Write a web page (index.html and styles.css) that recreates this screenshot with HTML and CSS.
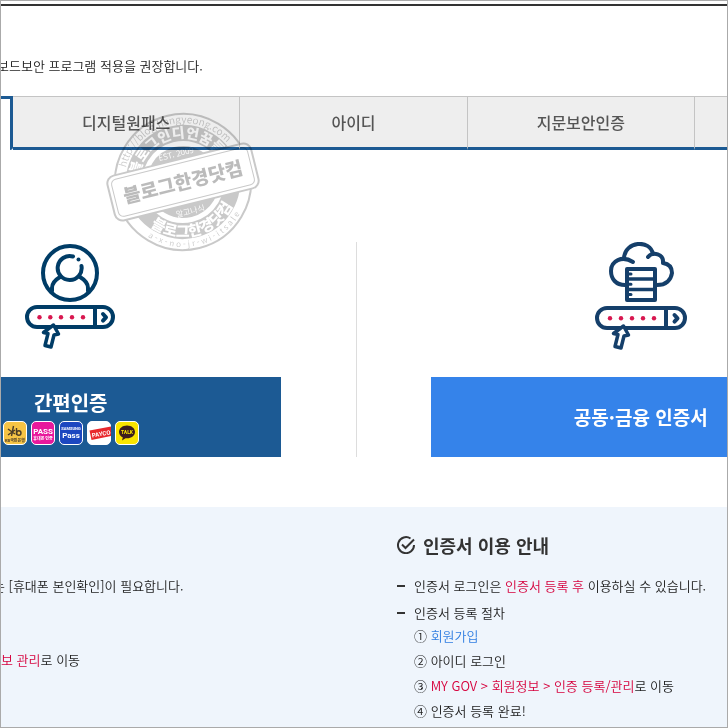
FILE: index.html
```html
<!DOCTYPE html>
<html lang="ko">
<head>
    <meta charset="UTF-8">
    <meta name="viewport" content="width=device-width, initial-scale=1.0">
    <title>로그인</title>
    <link rel="stylesheet" href="styles.css">
</head>
<body>
    <div class="page">
        <p class="notice">보드보안 프로그램 적용을 권장합니다.</p>

        <nav class="tabs">
            <a href="#" class="tab active" aria-label="인증서"></a>
            <a href="#" class="tab">디지털원패스</a>
            <a href="#" class="tab">아이디</a>
            <a href="#" class="tab">지문보안인증</a>
            <a href="#" class="tab" aria-label="더보기"></a>
        </nav>

        <main class="choices">
            <section class="choice choice-left">
                <svg class="choice-icon" viewBox="21 242 100 110" fill="none" stroke="#003c66" stroke-width="4" stroke-linecap="round" stroke-linejoin="round">
                    <circle cx="70" cy="273" r="27"/>
                    <path d="M73 256.500A12 12 0 1 0 81.500 266"/>
                    <path d="M52 291v-3c0-4 3-8 8-11M80 277c5 3 8 7 8 11v3"/>
                    <circle cx="78.500" cy="259.500" r="2" fill="#003c66" stroke="none"/>
                    <rect x="27" y="307" width="86" height="20" rx="10"/>
                    <path d="M95 307v20"/>
                    <path d="M103 314l3 3.300-3 3.300" stroke-width="4"/>
                    <g fill="#d8174f" stroke="none">
                        <circle cx="39.500" cy="317.300" r="2.200"/>
                        <circle cx="50.300" cy="317.300" r="2.200"/>
                        <circle cx="61" cy="317.300" r="2.200"/>
                        <circle cx="72" cy="317.300" r="2.200"/>
                        <circle cx="83" cy="317.300" r="2.200"/>
                    </g>
                    <path d="M53.500 325L43.500 332.500L48 333.500L45 345.500L51 347L54 335L58.500 334Z" fill="#fff" stroke-width="3.500"/>
                </svg>
                <button type="button" class="choice-button simple">
                    <span>간편인증</span>
                    <span class="apps">
                        <svg viewBox="0 0 24 24" class="app">
                            <rect x=".5" y=".5" width="23" height="23" rx="4.500" fill="#f6c445" stroke="#fff"/>
                            <path d="M5 8l7 5M10.500 5l-2 10M5 14l7-5M13.500 7v7" stroke="#4a3c28" stroke-width="1.400" fill="none"/>
                            <circle cx="15.800" cy="12" r="2.200" stroke="#4a3c28" stroke-width="1.400" fill="none"/>
                            <text x="12" y="21" font-size="4" fill="#4a3c28">KB국민은행</text>
                        </svg>
                        <svg viewBox="0 0 24 24" class="app">
                            <rect x=".5" y=".5" width="23" height="23" rx="4.500" fill="#e8189c" stroke="#fff"/>
                            <text x="12" y="13" font-size="8" fill="#fff">PASS</text>
                            <text x="12" y="19" font-size="4" fill="#fff">휴대폰 인증</text>
                        </svg>
                        <svg viewBox="0 0 24 24" class="app">
                            <rect x=".5" y=".5" width="23" height="23" rx="4.500" fill="#1c47c0" stroke="#fff"/>
                            <text x="12" y="9" font-size="4" fill="#fff">SAMSUNG</text>
                            <text x="12" y="17" font-size="8" fill="#fff">Pass</text>
                        </svg>
                        <svg viewBox="0 0 24 24" class="app">
                            <rect x=".5" y=".5" width="23" height="23" rx="4.500" fill="#fff" stroke="#fff"/>
                            <path d="M2.500 9.500L24 5.500V15L4.500 19Z" fill="#e8282d"/>
                            <text x="14" y="15" font-size="6" fill="#fff" transform="rotate(-10 14 12)">PAYCO</text>
                        </svg>
                        <svg viewBox="0 0 24 24" class="app">
                            <rect x=".5" y=".5" width="23" height="23" rx="4.500" fill="#f8e400" stroke="#fff"/>
                            <path d="M12 4.500c-4.600 0-8 2.900-8 6.500 0 2.400 1.500 4.400 3.800 5.500l-.8 3 3.500-2.300c5.300.6 9.500-2.200 9.500-6.200 0-3.600-3.400-6.500-8-6.500z" fill="#3b1e1e"/>
                            <text x="12" y="13" font-size="5" fill="#f8e400">TALK</text>
                        </svg>
                    </span>
                </button>
            </section>

            <section class="choice choice-right">
                <svg class="choice-icon" viewBox="591 242 100 110" fill="none" stroke="#153f6a" stroke-width="4" stroke-linecap="round" stroke-linejoin="round">
                    <path d="M625 285C616 285 611 279 611 271C611 261 622 255 633 262"/>
                    <path d="M624 258C625 241 650 239 653 254"/>
                    <path d="M648 257C653 251 664 254 663 263C670 264 672 268 672 273C671 280 666 285 657 285"/>
                    <rect x="627" y="269" width="28" height="31"/>
                    <path d="M627 279h28M627 289.500h28" stroke-width="3.500"/>
                    <path d="M628 274h3M628 284.300h3M628 294.600h3" stroke-width="3"/>
                    <rect x="597" y="308" width="88" height="20" rx="10"/>
                    <path d="M666 308v20"/>
                    <path d="M674.500 315l3 3.300-3 3.300" stroke-width="4"/>
                    <g fill="#d8174f" stroke="none">
                        <circle cx="610" cy="318.300" r="2.200"/>
                        <circle cx="621" cy="318.300" r="2.200"/>
                        <circle cx="632" cy="318.300" r="2.200"/>
                        <circle cx="643" cy="318.300" r="2.200"/>
                        <circle cx="654" cy="318.300" r="2.200"/>
                    </g>
                    <path d="M623.500 326L613.500 333.500L618 334.500L615 346.500L621 348L624 336L628.500 335Z" fill="#fff" stroke-width="3.500"/>
                </svg>
                <button type="button" class="choice-button joint">공동·금융 인증서</button>
            </section>
        </main>

        <div class="guide">
            <section class="guide-left">
                <ul class="guide-list">
                    <li>는 [휴대폰 본인확인]이 필요합니다.</li>
                </ul>
                <p class="guide-step"><em>보 관리</em>로 이동</p>
            </section>

            <section class="guide-right">
                <h2>
                    <svg class="check" viewBox="0 0 18 18" fill="none" stroke="#333" stroke-width="2">
                        <path d="M13.500 2.500A8 8 0 1 0 17 9"/>
                        <path d="M5 8.500l3.500 3.500L17 3.500"/>
                    </svg>
                    인증서 이용 안내
                </h2>
                <ul class="guide-list dashed">
                    <li>인증서 로그인은 <em>인증서 등록 후</em> 이용하실 수 있습니다.</li>
                    <li>인증서 등록 절차
                        <ol>
                            <li>① <a href="#">회원가입</a></li>
                            <li>② 아이디 로그인</li>
                            <li>③ <em>MY GOV &gt; 회원정보 &gt; 인증 등록/관리</em>로 이동</li>
                            <li>④ 인증서 등록 완료!</li>
                        </ol>
                    </li>
                </ul>
            </section>
        </div>

        <svg class="stamp" viewBox="-80 -80 160 160">
            <defs>
                <path id="outerTop" d="M-59 0A59 59 0 0 1 59 0"/>
                <path id="outerBottom" d="M-65 0A65 65 0 0 0 65 0"/>
                <path id="innerTop" d="M-44 0A44 44 0 0 1 44 0"/>
                <path id="innerBottom" d="M-55 0A55 55 0 0 0 55 0"/>
            </defs>
            <g transform="rotate(-14)" text-anchor="middle">
                <circle r="68" fill="#fff" stroke="#777" stroke-width="2"/>
                <circle r="49" fill="none" stroke="#777" stroke-width="16"/>
                <circle r="37" fill="#777" stroke="#fff" stroke-width="2"/>
                <text font-size="10" fill="#777"><textPath href="#outerTop" startOffset="50%">http://blog.hangyeong.com</textPath></text>
                <text font-size="8" fill="#777"><textPath href="#outerBottom" startOffset="50%">a - x - n o - j r - w i - i t s a l e</textPath></text>
                <text font-size="14" font-weight="900" fill="#fff"><textPath href="#innerTop" startOffset="50%">블로그인디언꿈들</textPath></text>
                <text font-size="15" font-weight="900" fill="#fff"><textPath href="#innerBottom" startOffset="50%">블로그한경닷컴</textPath></text>
                <text y="-26" font-size="8" fill="#fff">EST. 2009</text>
                <text y="33" font-size="8" fill="#fff">알고나식</text>
                <rect x="-74" y="-23" width="148" height="46" rx="8" fill="#fff" stroke="#777" stroke-width="2"/>
                <rect x="-70" y="-19" width="140" height="38" rx="5" fill="#fff" stroke="#777"/>
                <text y="7" font-size="19" font-weight="900" fill="#555">블로그한경닷컴</text>
            </g>
        </svg>
    </div>
</body>
</html>
```

FILE: styles.css
```css
* {
    box-sizing: border-box;
}
body {
    margin: 0;
    font-family: "Noto Sans CJK KR", sans-serif;
    font-size: 13px;
    font-weight: 350;
    color: #222;
}
.page {
    position: relative;
    display: flex;
    flex-direction: column;
    min-height: 100vh;
    border: 1px solid #aaa;
    overflow: hidden;
    background: #fff;
}
.page::before {
    content: "";
    height: 2px;
    margin-top: 3px;
    background: #333;
}
ul, ol, p, h2 {
    margin: 0;
    padding: 0;
    list-style: none;
}
em {
    font-style: normal;
    color: #d6003c;
}
a {
    color: #2f7de1;
    text-decoration: none;
}
.notice {
    margin: 50px 0 20px -4px;
    line-height: 20px;
    white-space: nowrap;
}

/* tabs */
.tabs {
    display: grid;
    grid-template-columns: 12px repeat(3, 1fr) 32px;
    height: 54px;
}
.tab {
    display: flex;
    align-items: center;
    justify-content: center;
    border-top: 1px solid #c4c4c4;
    border-right: 1px solid #c4c4c4;
    border-bottom: 3px solid #1c5a93;
    background: #eee;
    color: #555;
    font-size: 16px;
    font-weight: 500;
}
.tab:last-child {
    border-right: 0;
}
.tab.active {
    border-top: 3px solid #1c5a93;
    border-right: 3px solid #1c5a93;
    border-bottom: 0;
    border-bottom-right-radius: 3px;
    background: #fff;
}

/* login choices */
.choices {
    display: grid;
    grid-template-columns: 49% 51%;
    padding: 92px 0 50px;
}
.choice {
    display: flex;
    flex-direction: column;
}
.choice-left {
    align-items: flex-end;
    padding-right: 75px;
    border-right: 1px solid #ddd;
}
.choice-right {
    align-items: flex-start;
    padding-left: 74px;
}
.choice-icon {
    width: 100px;
    height: 110px;
    margin: 0 160px 25px;
}
.choice-button {
    display: flex;
    flex-direction: column;
    flex-shrink: 0;
    align-items: center;
    justify-content: center;
    gap: 4px;
    width: 420px;
    height: 80px;
    padding: 0;
    border: 0;
    color: #fff;
    font-family: inherit;
    font-size: 20px;
    font-weight: 700;
    line-height: 28px;
    cursor: pointer;
}
.simple {
    background: #1c5a94;
}
.joint {
    background: #3583ea;
    font-size: 19px;
}
.apps {
    display: flex;
    gap: 4px;
}
.app {
    width: 24px;
    height: 24px;
    font-family: Roboto, "Noto Sans CJK KR", sans-serif;
    font-weight: 700;
    text-anchor: middle;
}

/* guide */
.guide {
    display: grid;
    grid-template-columns: 396px 1fr;
    flex: 1;
    padding: 24px 0 0;
    background: #eff5fc;
    white-space: nowrap;
}
.guide-left {
    padding-top: 45px;
}
.guide-left .guide-list {
    margin-left: -8px;
}
.guide-step {
    margin-top: 51px;
    line-height: 25px;
}
.guide h2 {
    display: flex;
    align-items: center;
    gap: 8px;
    margin-bottom: 17px;
    font-size: 18px;
    font-weight: 700;
    line-height: 28px;
    color: #333;
}
.check {
    width: 18px;
    height: 18px;
}
.guide-list > li {
    margin-bottom: 7px;
    line-height: 20px;
}
.dashed > li {
    padding-left: 17px;
    background: linear-gradient(#333, #333) 0 9px / 8px 2px no-repeat;
}
.dashed > li:last-child {
    margin-bottom: 0;
}
.guide-list ol {
    line-height: 25px;
}

.stamp {
    position: absolute;
    top: 101px;
    left: 102px;
    width: 160px;
    height: 160px;
    opacity: .4;
    mix-blend-mode: multiply;
    pointer-events: none;
}
```
